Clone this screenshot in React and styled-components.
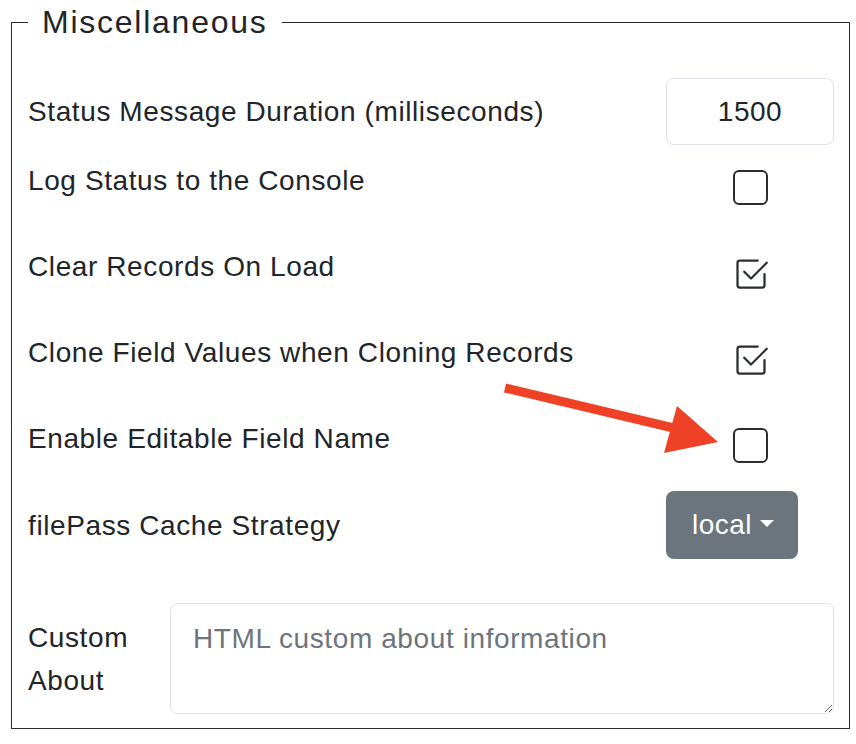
import React from 'react';
import styled, { createGlobalStyle } from 'styled-components';
import { BsCheck2Square } from 'react-icons/bs';

const GlobalStyle = createGlobalStyle`
  body {
    margin: 0;
    background: #ffffff;
    font-family: 'Liberation Sans', Arial, sans-serif;
    color: #212529;
  }
`;

const Page = styled.div`
  position: relative;
  width: 856px;
  height: 744px;
  overflow: hidden;
  padding-top: 6px;
  box-sizing: border-box;
`;

const Fieldset = styled.fieldset`
  margin: 0 0 0 11px;
  width: 839px;
  height: 723px;
  box-sizing: border-box;
  border: 1px solid #2b2b2b;
  padding: 40px 15px 0 16px;
`;

const Legend = styled.legend`
  font-size: 32px;
  letter-spacing: 1.75px;
  line-height: 32px;
  padding: 0 14px;
  color: #212529;
`;

const Row = styled.div`
  display: flex;
  align-items: ${(p) => (p.$top ? 'flex-start' : 'center')};
  justify-content: space-between;
  height: ${(p) => (p.$h ? `${p.$h}px` : 'auto')};
  margin-top: ${(p) => p.$mt || 0}px;
  margin-bottom: ${(p) => p.$gap || 0}px;
`;

const Label = styled.div`
  font-size: 28px;
  letter-spacing: 0.6px;
  line-height: 43px;
  width: ${(p) => (p.$narrow ? '142px' : 'auto')};
  padding-top: ${(p) => p.$pt || 0}px;
`;

const Control = styled.div`
  width: 168px;
  display: flex;
  justify-content: ${(p) => (p.$left ? 'flex-start' : 'center')};
  padding-top: ${(p) => p.$pt || 0}px;
`;

const NumberInput = styled.input`
  width: 168px;
  height: 67px;
  box-sizing: border-box;
  border: 1px solid #dee2e6;
  border-radius: 8px;
  font-family: inherit;
  font-size: 28px;
  letter-spacing: 0.5px;
  color: #212529;
  text-align: center;
  outline: none;
`;

const Box = styled.span`
  display: block;
  width: 35px;
  height: 35px;
  box-sizing: border-box;
  border: 2px solid #2a2d31;
  border-radius: 6px;
`;

const Checked = styled(BsCheck2Square)`
  display: block;
  color: #2a2d31;
  margin-left: 1px;
`;

const Dropdown = styled.button`
  display: flex;
  align-items: center;
  gap: 8px;
  height: 68px;
  width: 132px;
  justify-content: center;
  border: none;
  border-radius: 8px;
  background: #6c757d;
  color: #ffffff;
  font-family: inherit;
  font-size: 28px;
  letter-spacing: 0.5px;
  padding: 0 0 0 2px;
`;

const Caret = styled.span`
  width: 0;
  height: 0;
  border-left: 7px solid transparent;
  border-right: 7px solid transparent;
  border-top: 7px solid #ffffff;
  margin-top: -4px;
`;

const TextArea = styled.textarea`
  width: 664px;
  height: 111px;
  box-sizing: border-box;
  border: 1px solid #dee2e6;
  border-radius: 8px;
  padding: 13px 22px;
  font-family: inherit;
  font-size: 28px;
  letter-spacing: 0.6px;
  line-height: 43px;
  color: #212529;
  outline: none;
  &::placeholder {
    color: #6c757d;
  }
`;

const Arrow = styled.svg`
  position: absolute;
  left: 500px;
  top: 380px;
`;

const checks = [
  { label: 'Log Status to the Console', on: false },
  { label: 'Clear Records On Load', on: true },
  { label: 'Clone Field Values when Cloning Records', on: true },
  { label: 'Enable Editable Field Name', on: false },
];

export default function App() {
  return (
    <Page>
      <GlobalStyle />
      <Fieldset>
        <Legend>Miscellaneous</Legend>
        <Row $gap={14}>
          <Label>Status Message Duration (milliseconds)</Label>
          <NumberInput defaultValue="1500" />
        </Row>
        {checks.map((c) => (
          <Row key={c.label} $top $h={43} $gap={43}>
            <Label>{c.label}</Label>
            <Control $pt={11}>
              {c.on ? <Checked size={36} /> : <Box />}
            </Control>
          </Row>
        ))}
        <Row $mt={-12} $gap={44}>
          <Label>filePass Cache Strategy</Label>
          <Control $left>
            <Dropdown>
              local <Caret />
            </Dropdown>
          </Control>
        </Row>
        <Row $top>
          <Label $narrow $pt={13}>
            Custom About
          </Label>
          <TextArea placeholder="HTML custom about information" />
        </Row>
      </Fieldset>
      <Arrow width="230" height="80" viewBox="0 0 230 80">
        <line x1="5" y1="8" x2="182" y2="50" stroke="#ee4125" strokeWidth="9" />
        <polygon points="177,26 218,62 164,73" fill="#ee4125" />
      </Arrow>
    </Page>
  );
}
